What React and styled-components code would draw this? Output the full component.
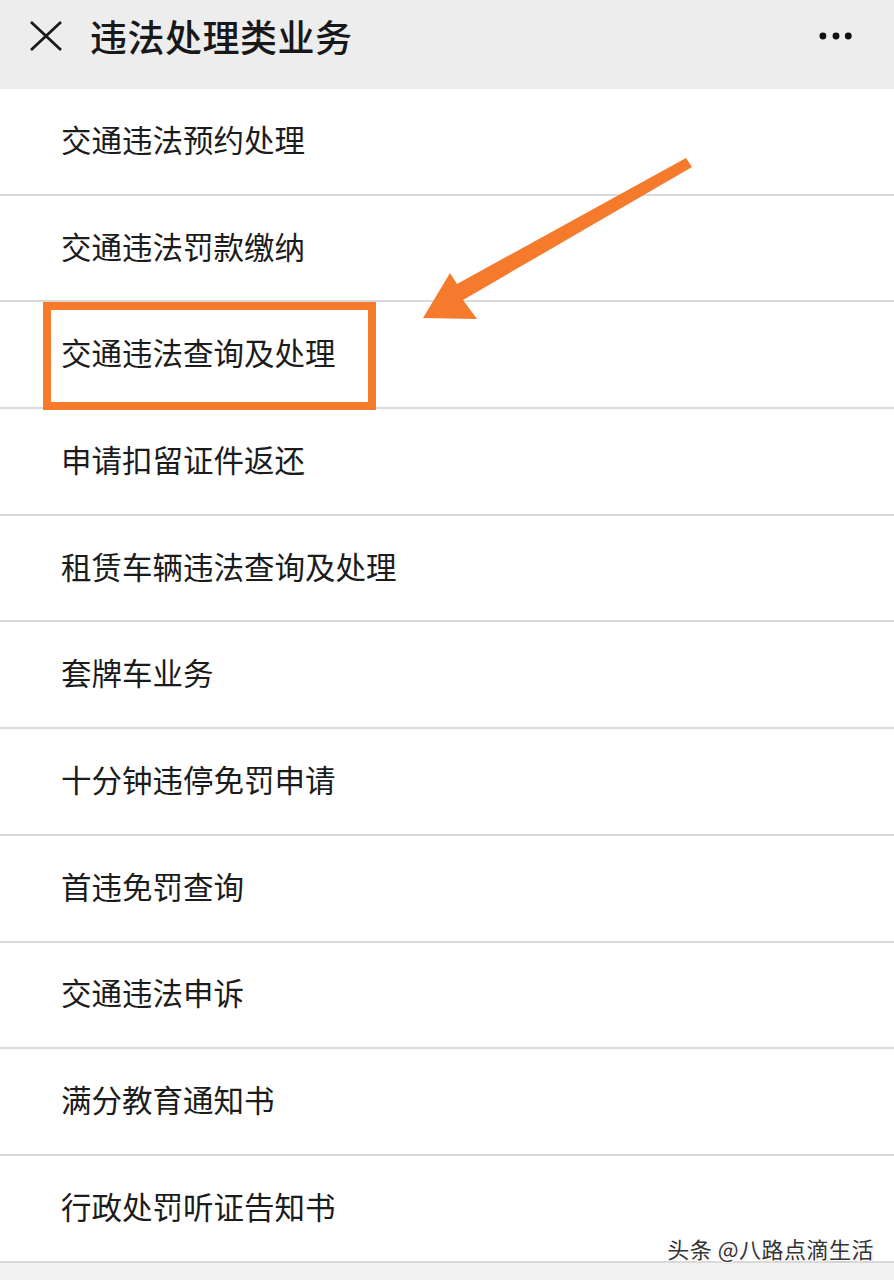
import React from 'react';
import styled, { createGlobalStyle } from 'styled-components';

const GlobalStyle = createGlobalStyle`
  html, body {
    margin: 0;
    padding: 0;
    background: #f2f2f2;
  }
  body {
    font-family: "Noto Sans CJK SC", "Noto Sans", sans-serif;
  }
`;

const items = [
  '交通违法预约处理',
  '交通违法罚款缴纳',
  '交通违法查询及处理',
  '申请扣留证件返还',
  '租赁车辆违法查询及处理',
  '套牌车业务',
  '十分钟违停免罚申请',
  '首违免罚查询',
  '交通违法申诉',
  '满分教育通知书',
  '行政处罚听证告知书',
];

const Page = styled.div`
  position: relative;
  width: 894px;
  height: 1280px;
  overflow: hidden;
  background: #f2f2f2;
`;

const TopBar = styled.header`
  height: 89px;
  display: flex;
  align-items: center;
  padding: 0 40px 18px 28px;
  box-sizing: border-box;
  background: #ededed;
`;

const IconButton = styled.div`
  width: 36px;
  height: 36px;
  display: flex;
  align-items: center;
  justify-content: center;
`;

const Title = styled.h1`
  flex: 1;
  margin: 0 0 0 26px;
  font-size: 37px;
  font-weight: 500;
  color: #181818;
  letter-spacing: 0.5px;
`;

const List = styled.ul`
  list-style: none;
  margin: 0;
  padding: 0;
  background: #ffffff;
`;

const Row = styled.li`
  position: relative;
  height: 106.7px;
  box-sizing: border-box;
  display: flex;
  align-items: center;
  padding: 0 0 5px 61px;
  border-bottom: 2px solid #dadada;
  font-size: 30.5px;
  color: #1c1c1c;

  ${({ $marked }) =>
    $marked &&
    `
    &::after {
      content: '';
      position: absolute;
      left: 43px;
      top: 0;
      width: 333px;
      height: 108px;
      box-sizing: border-box;
      border: 8px solid #f57a2c;
    }
  `}
`;

const Pointer = styled.svg`
  position: absolute;
  left: 0;
  top: 0;
  pointer-events: none;
`;

const Watermark = styled.div`
  position: absolute;
  right: 20px;
  top: 1232px;
  font-size: 22px;
  color: #333333;
  letter-spacing: 0.5px;
  text-shadow: 1px 1px 0 #ffffff, -1px -1px 0 #ffffff, 1px -1px 0 #ffffff, -1px 1px 0 #ffffff,
    1px 1px 2px rgba(0, 0, 0, 0.25);
`;

export default function App() {
  return (
    <Page>
      <GlobalStyle />
      <TopBar>
        <IconButton>
          <svg width="36" height="36" viewBox="0 0 36 36">
            <path d="M3 4 L33 32 M33 4 L3 32" stroke="#1a1a1a" strokeWidth="2.8" fill="none" />
          </svg>
        </IconButton>
        <Title>违法处理类业务</Title>
        <IconButton>
          <svg width="44" height="12" viewBox="0 0 44 12">
            <circle cx="6" cy="6" r="4.2" fill="#111111" />
            <circle cx="22" cy="6" r="4.2" fill="#111111" />
            <circle cx="37" cy="6" r="4.2" fill="#111111" />
          </svg>
        </IconButton>
      </TopBar>
      <List>
        {items.map((text, i) => (
          <Row key={text} $marked={i === 2}>
            {text}
          </Row>
        ))}
      </List>
      <Pointer width="894" height="1280" viewBox="0 0 894 1280">
        <path
          d="M686 158 L692 167 L463 300 L477 319 L423 318 L450 273 L457 284 Z"
          fill="#f57a2c"
        />
      </Pointer>
      <Watermark>头条 @八路点滴生活</Watermark>
    </Page>
  );
}
